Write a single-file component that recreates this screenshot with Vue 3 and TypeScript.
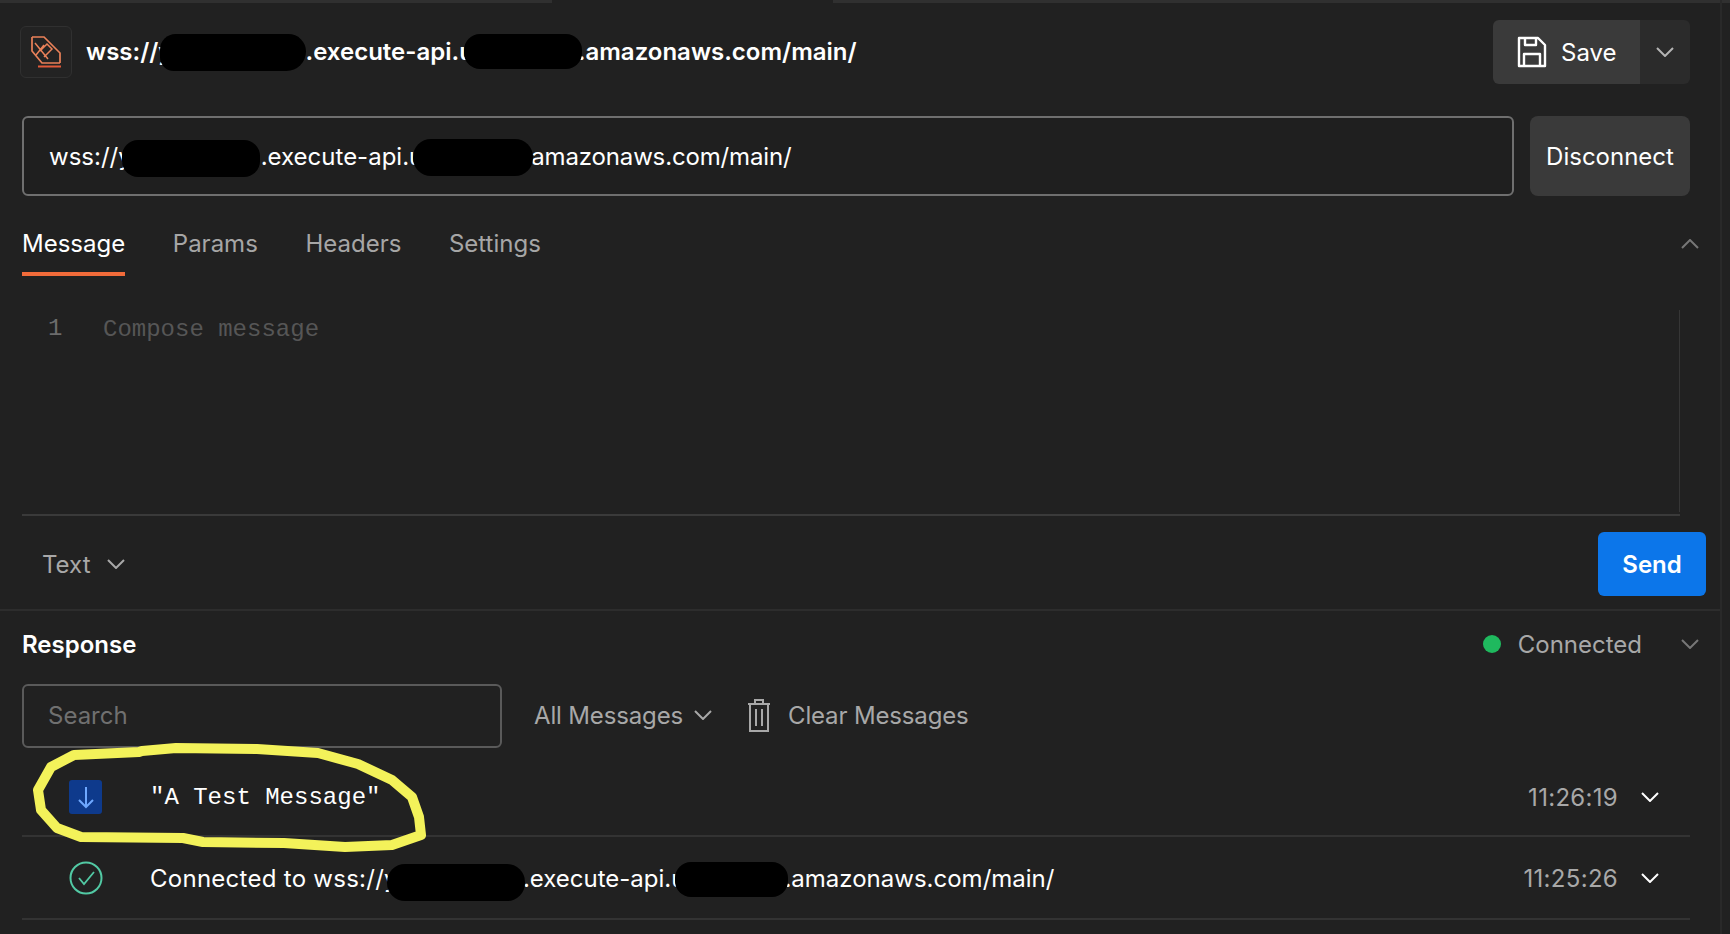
<script setup lang="ts">
const tabs: string[] = ['Message', 'Params', 'Headers', 'Settings']
</script>

<template>
  <div class="page">
    <div class="strip"><i class="seg-a"></i><i class="seg-b"></i></div>

    <header class="head">
      <div class="logo">
        <svg width="32" height="34" viewBox="0 0 32 34" fill="none" stroke="#ea8159" stroke-width="1.7">
          <path d="M2 2h12l16 16v10M2 2v14l10 12h18" />
          <path d="M5 8l13 16M14 10l-8 10M10 16l7-7 5 5-8 8" stroke-width="1.5" />
          <path d="M8 31.500h23" stroke="#e25a3a" stroke-width="2" />
        </svg>
      </div>
      <div class="title">
        <span>wss://y</span><span class="blob t1"></span><span>.execute-api.u</span><span class="blob t2"></span><span>.amazonaws.com/main/</span>
      </div>
      <div class="save-group">
        <button class="save">
          <svg width="30" height="32" viewBox="0 0 30 32" fill="none" stroke="#fff" stroke-width="2.4" stroke-linejoin="round">
            <path d="M2 2h19l7 7v21H2zM8 2v7h11V2M7 30V18h16v12" />
          </svg>
          <span>Save</span>
        </button>
        <button class="save-more">
          <svg class="chev" viewBox="0 0 18 10"><path d="M1 1l8 8 8-8" /></svg>
        </button>
      </div>
    </header>

    <div class="url-row">
      <div class="url">
        <span>wss://y</span><span class="blob u1"></span><span>.execute-api.u</span><span class="blob u2"></span><span class="tail">amazonaws.com/main/</span>
      </div>
      <button class="disconnect">Disconnect</button>
    </div>

    <nav class="tabs">
      <span v-for="(t, i) in tabs" :key="t" class="tab" :class="{ active: i === 0 }">{{ t }}</span>
      <svg class="chev tabs-chev" viewBox="0 0 18 10"><path d="M1 9l8-8 8 8" /></svg>
    </nav>

    <section class="editor">
      <span class="gutter">1</span>
      <span class="placeholder">Compose message</span>
    </section>

    <div class="toolbar">
      <div class="format">
        <span>Text</span>
        <svg class="chev" viewBox="0 0 18 10"><path d="M1 1l8 8 8-8" /></svg>
      </div>
      <button class="send">Send</button>
    </div>

    <div class="response-head">
      <strong>Response</strong>
      <div class="status">
        <i class="dot"></i>
        <span>Connected</span>
        <svg class="chev" viewBox="0 0 18 10"><path d="M1 1l8 8 8-8" /></svg>
      </div>
    </div>

    <div class="filters">
      <div class="search">Search</div>
      <div class="all">
        <span>All Messages</span>
        <svg class="chev" viewBox="0 0 18 10"><path d="M1 1l8 8 8-8" /></svg>
      </div>
      <div class="clear">
        <svg width="24" height="34" viewBox="0 0 24 34" fill="none" stroke="#a8a8a8" stroke-width="2">
          <path d="M1 6h22M8 6V2h8v4M3 6v27h18V6M9 11v17M15 11v17" />
        </svg>
        <span>Clear Messages</span>
      </div>
    </div>

    <div class="row first">
      <span class="in-icon">
        <svg width="20" height="24" viewBox="0 0 20 24" fill="none" stroke="#6ea8ff" stroke-width="2">
          <path d="M10 2v20M3 15l7 7 7-7" />
        </svg>
      </span>
      <span class="mono">"A Test Message"</span>
      <span class="time">11:26:19</span>
      <svg class="chev row-chev" viewBox="0 0 18 10"><path d="M1 1l8 8 8-8" /></svg>
    </div>
    <div class="row second">
      <svg class="check" width="34" height="34" viewBox="0 0 34 34" fill="none" stroke="#52c9a4" stroke-width="2">
        <circle cx="17" cy="17" r="15.5" />
        <path d="M10 17l5 6 10-12" stroke-width="1.8" />
      </svg>
      <span class="msg">
        <span class="lead">Connected to wss://y</span><span class="blob c1"></span><span>.execute-api.u</span><span class="blob c2"></span><span>.amazonaws.com/main/</span>
      </span>
      <span class="time">11:25:26</span>
      <svg class="chev row-chev" viewBox="0 0 18 10"><path d="M1 1l8 8 8-8" /></svg>
    </div>

    <svg class="scribble" width="440" height="120" viewBox="30 740 440 120" fill="none" stroke="#f3f25a" stroke-width="10" stroke-linejoin="round" stroke-linecap="round">
      <path d="M139 752L142 751L176 748L257 749L318 753L358 764L392 780L412 797L419 817L421 835L392 845L345 847L284 843L203 842L183 838L81 837L57 828L41 810L38 790L51 767L74 755Z" />
    </svg>
  </div>
</template>

<style>
html, body { margin: 0; background: #212121; }
</style>

<style scoped>
.page {
  position: relative;
  width: 1730px;
  height: 934px;
  overflow: hidden;
  box-sizing: border-box;
  display: flex;
  flex-direction: column;
  background: #212121;
  color: #fff;
  font-family: Inter, "Liberation Sans", sans-serif;
  font-size: 24px;
}
.page::after {
  content: "";
  position: absolute;
  top: 0;
  bottom: 0;
  left: 1720px;
  width: 2px;
  background: #292929;
}
button { font: inherit; border: 0; color: inherit; padding: 0; }
.strip { height: 3px; display: flex; justify-content: space-between; }
.strip i { height: 3px; background: #303030; display: block; }
.seg-a { width: 552px; }
.seg-b { width: 897px; }

.head { margin-top: 17px; padding: 0 40px 0 20px; display: flex; align-items: center; box-sizing: border-box; height: 64px; }
.logo { width: 52px; height: 52px; box-sizing: border-box; border: 1px solid #303030; border-radius: 6px; display: flex; align-items: center; justify-content: center; margin-right: 14px; background: #232323; }
.title { font-weight: 600; font-size: 24px; display: flex; align-items: center; white-space: nowrap; flex: 1; margin-top: -2px; }
.blob { display: inline-block; background: #000; position: relative; flex: none; }
.t1 { width: 146px; height: 37px; margin: 2px -1px 0 -12px; border-radius: 16px 18px 20px 14px; }
.t2 { width: 118px; height: 35px; margin: 0 -4px 0 -10px; border-radius: 16px; }
.save-group { display: flex; height: 64px; }
.save { width: 147px; background: #3a3a3a; border-radius: 6px 0 0 6px; display: flex; align-items: center; gap: 14px; padding-left: 24px; box-sizing: border-box; }
.save-more { width: 50px; background: #2b2b2b; border-radius: 0 6px 6px 0; display: flex; align-items: center; justify-content: center; color: #b4b4b4; }

.url-row { display: flex; margin-top: 32px; padding: 0 40px 0 22px; gap: 16px; height: 80px; }
.url { flex: 1; box-sizing: border-box; border: 2px solid #6f6f6f; border-radius: 6px; display: flex; align-items: center; padding-left: 25px; white-space: nowrap; background: #1f1f1f; }
.u1 { width: 138px; height: 37px; margin: 4px 1px 0 -10px; border-radius: 16px; }
.u2 { width: 120px; height: 37px; margin: 2px -2px 0 -10px; border-radius: 18px; }
.tail { letter-spacing: -0.15px; }
.disconnect { width: 160px; background: #3a3a3a; border-radius: 8px; }

.tabs { height: 80px; padding: 0 0 0 22px; display: flex; align-items: flex-end; gap: 47.6px; position: relative; }
.tab { height: 80px; box-sizing: border-box; padding-top: 33px; line-height: 30px; color: #a6a6a6; border-bottom: 4px solid transparent; }
.tab.active { color: #fff; border-bottom-color: #f26b3a; }
.chev { width: 18px; height: 10px; fill: none; stroke: currentColor; stroke-width: 2; flex: none; }
.tabs-chev { position: absolute; left: 1681px; top: 43px; color: #777; }

.editor { height: 240px; margin: 0 50px 0 22px; box-sizing: border-box; border-bottom: 2px solid #3a3a3a; position: relative; display: flex; align-items: flex-start; padding: 40px 0 0 26px; font-family: "Liberation Mono", monospace; }
.editor::after { content: ""; position: absolute; right: 0; top: 34px; bottom: 2px; width: 1px; background: #363636; }
.gutter { color: #6c6c6c; line-height: 28px; width: 55px; margin-top: -1px; }
.placeholder { color: #565656; line-height: 28px; }

.toolbar { height: 95px; box-sizing: border-box; padding: 16px 16px 0 42px; display: flex; justify-content: space-between; align-items: flex-start; border-bottom: 2px solid #2d2d2d; margin-right: 8px; }
.format { height: 64px; display: flex; align-items: center; gap: 16px; color: #a8a8a8; }
.send { width: 108px; height: 64px; border-radius: 6px; background: #0c76ea; font-weight: 600; }

.response-head { height: 73px; padding: 0 31px 7px 22px; box-sizing: border-box; display: flex; align-items: center; justify-content: space-between; }
.response-head strong { font-weight: 600; }
.status { display: flex; align-items: center; color: #a8a8a8; }
.dot { width: 18px; height: 18px; border-radius: 50%; background: #1fb95e; margin-right: 17px; }
.status .chev { margin-left: 39px; color: #777; }

.filters { display: flex; align-items: center; height: 64px; padding-left: 22px; color: #a8a8a8; }
.search { width: 480px; height: 64px; box-sizing: border-box; border: 2px solid #5a5a5a; border-radius: 6px; padding: 0 0 2px 24px; display: flex; align-items: center; color: #707070; }
.all { margin-left: 32px; padding-bottom: 2px; display: flex; align-items: center; gap: 11px; letter-spacing: -0.15px; }
.clear { margin-left: 35px; padding-bottom: 2px; display: flex; align-items: center; gap: 17px; letter-spacing: -0.15px; }

.row { margin: 0 40px 0 22px; display: flex; align-items: center; box-sizing: border-box; white-space: nowrap; border-bottom: 2px solid #333; }
.first { height: 89px; padding-top: 11px; }
.second { height: 83px; padding-top: 1px; }
.in-icon { width: 33px; height: 34px; margin-left: 47px; background: #0e3a8c; border-radius: 3px; display: flex; align-items: center; justify-content: center; }
.check { margin-left: 47px; flex: none; }
.mono { margin-left: 48px; flex: 1; font-family: "Liberation Mono", monospace; }
.msg { margin-left: 47px; flex: 1; display: flex; align-items: center; }
.lead { letter-spacing: 0.27px; }
.c1 { width: 138px; height: 37px; margin: 8px -2px 0 -11px; border-radius: 18px; }
.c2 { width: 113px; height: 35px; margin: 2px -4px 0 -10px; border-radius: 16px; }
.time { color: #a8a8a8; letter-spacing: 0.3px; }
.row-chev { margin: 0 31px 0 23px; color: #fff; }

.scribble { position: absolute; left: 30px; top: 740px; }
</style>
